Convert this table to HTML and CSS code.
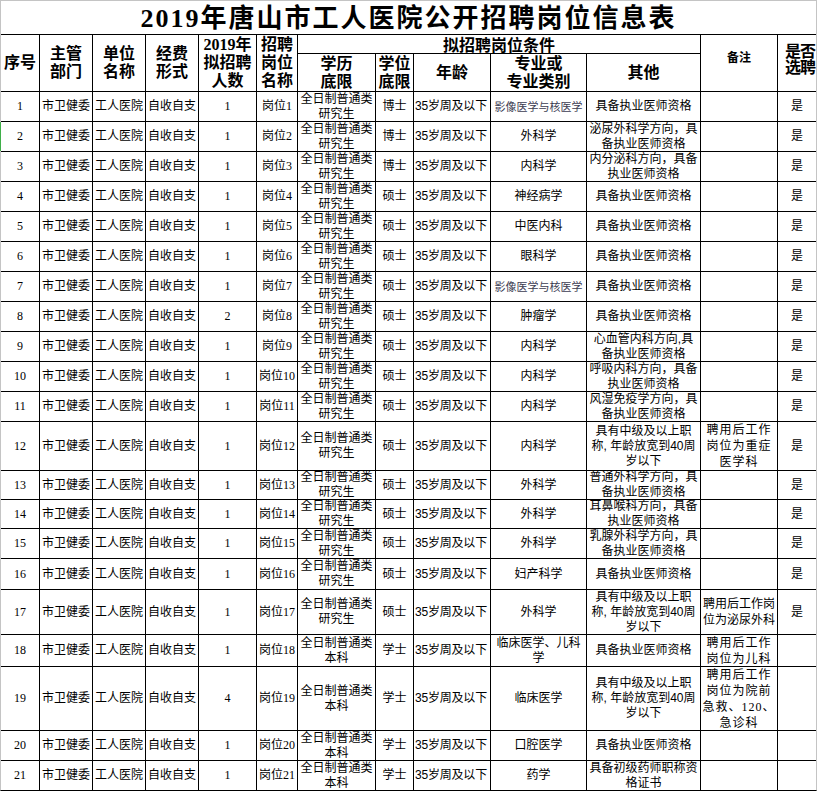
FILE: index.html
```html
<!DOCTYPE html>
<html lang="zh-CN">
<head>
<meta charset="utf-8">
<title>2019年唐山市工人医院公开招聘岗位信息表</title>
<link rel="stylesheet" href="styles.css">
</head>
<body>
<div class="sheet">
  <div class="c title">2019年唐山市工人医院公开招聘岗位信息表</div>

  <div class="c h span2">序号</div>
  <div class="c h span2">主管<br>部门</div>
  <div class="c h span2">单位<br>名称</div>
  <div class="c h span2">经费<br>形式</div>
  <div class="c h span2 h-num">2019年<br>拟招聘<br>人数</div>
  <div class="c h span2">招聘<br>岗位<br>名称</div>
  <div class="c h group">拟招聘岗位条件</div>
  <div class="c h span2 h-note">备注</div>
  <div class="c h span2 h-sel">是否<br>选聘</div>
  <div class="c h">学历<br>底限</div>
  <div class="c h">学位<br>底限</div>
  <div class="c h">年龄</div>
  <div class="c h">专业或<br>专业类别</div>
  <div class="c h">其他</div>

  <div class="row"><div class="c n">1</div><div class="c">市卫健委</div><div class="c">工人医院</div><div class="c">自收自支</div><div class="c n">1</div><div class="c">岗位1</div><div class="c">全日制普通类<br>研究生</div><div class="c">博士</div><div class="c age">35岁周及以下</div><div class="c"><span class="tiny">影像医学与核医学</span></div><div class="c other">具备执业医师资格</div><div class="c"></div><div class="c">是</div></div>

  <div class="row"><div class="c n mark">2</div><div class="c">市卫健委</div><div class="c">工人医院</div><div class="c">自收自支</div><div class="c n">1</div><div class="c">岗位2</div><div class="c">全日制普通类<br>研究生</div><div class="c">博士</div><div class="c age">35岁周及以下</div><div class="c">外科学</div><div class="c other">泌尿外科学方向，具<br>备执业医师资格</div><div class="c"></div><div class="c">是</div></div>

  <div class="row"><div class="c n">3</div><div class="c">市卫健委</div><div class="c">工人医院</div><div class="c">自收自支</div><div class="c n">1</div><div class="c">岗位3</div><div class="c">全日制普通类<br>研究生</div><div class="c">博士</div><div class="c age">35岁周及以下</div><div class="c">内科学</div><div class="c other">内分泌科方向，具备<br>执业医师资格</div><div class="c"></div><div class="c">是</div></div>

  <div class="row"><div class="c n">4</div><div class="c">市卫健委</div><div class="c">工人医院</div><div class="c">自收自支</div><div class="c n">1</div><div class="c">岗位4</div><div class="c">全日制普通类<br>研究生</div><div class="c">硕士</div><div class="c age">35岁周及以下</div><div class="c">神经病学</div><div class="c other">具备执业医师资格</div><div class="c"></div><div class="c">是</div></div>

  <div class="row"><div class="c n">5</div><div class="c">市卫健委</div><div class="c">工人医院</div><div class="c">自收自支</div><div class="c n">1</div><div class="c">岗位5</div><div class="c">全日制普通类<br>研究生</div><div class="c">硕士</div><div class="c age">35岁周及以下</div><div class="c">中医内科</div><div class="c other">具备执业医师资格</div><div class="c"></div><div class="c">是</div></div>

  <div class="row"><div class="c n">6</div><div class="c">市卫健委</div><div class="c">工人医院</div><div class="c">自收自支</div><div class="c n">1</div><div class="c">岗位6</div><div class="c">全日制普通类<br>研究生</div><div class="c">硕士</div><div class="c age">35岁周及以下</div><div class="c">眼科学</div><div class="c other">具备执业医师资格</div><div class="c"></div><div class="c">是</div></div>

  <div class="row"><div class="c n">7</div><div class="c">市卫健委</div><div class="c">工人医院</div><div class="c">自收自支</div><div class="c n">1</div><div class="c">岗位7</div><div class="c">全日制普通类<br>研究生</div><div class="c">硕士</div><div class="c age">35岁周及以下</div><div class="c"><span class="tiny">影像医学与核医学</span></div><div class="c other">具备执业医师资格</div><div class="c"></div><div class="c">是</div></div>

  <div class="row"><div class="c n">8</div><div class="c">市卫健委</div><div class="c">工人医院</div><div class="c">自收自支</div><div class="c n">2</div><div class="c">岗位8</div><div class="c">全日制普通类<br>研究生</div><div class="c">硕士</div><div class="c age">35岁周及以下</div><div class="c">肿瘤学</div><div class="c other">具备执业医师资格</div><div class="c"></div><div class="c">是</div></div>

  <div class="row"><div class="c n">9</div><div class="c">市卫健委</div><div class="c">工人医院</div><div class="c">自收自支</div><div class="c n">1</div><div class="c">岗位9</div><div class="c">全日制普通类<br>研究生</div><div class="c">硕士</div><div class="c age">35岁周及以下</div><div class="c">内科学</div><div class="c other">心血管内科方向,具<br>备执业医师资格</div><div class="c"></div><div class="c">是</div></div>

  <div class="row"><div class="c n">10</div><div class="c">市卫健委</div><div class="c">工人医院</div><div class="c">自收自支</div><div class="c n">1</div><div class="c">岗位10</div><div class="c">全日制普通类<br>研究生</div><div class="c">硕士</div><div class="c age">35岁周及以下</div><div class="c">内科学</div><div class="c other">呼吸内科方向，具备<br>执业医师资格</div><div class="c"></div><div class="c">是</div></div>

  <div class="row"><div class="c n">11</div><div class="c">市卫健委</div><div class="c">工人医院</div><div class="c">自收自支</div><div class="c n">1</div><div class="c">岗位11</div><div class="c">全日制普通类<br>研究生</div><div class="c">硕士</div><div class="c age">35岁周及以下</div><div class="c">内科学</div><div class="c other">风湿免疫学方向，具<br>备执业医师资格</div><div class="c"></div><div class="c">是</div></div>

  <div class="row"><div class="c n">12</div><div class="c">市卫健委</div><div class="c">工人医院</div><div class="c">自收自支</div><div class="c n">1</div><div class="c">岗位12</div><div class="c">全日制普通类<br>研究生</div><div class="c">硕士</div><div class="c age">35岁周及以下</div><div class="c">内科学</div><div class="c other">具有中级及以上职<br>称, 年龄放宽到40周<br>岁以下</div><div class="c note spaced">聘用后工作<br>岗位为重症<br>医学科</div><div class="c">是</div></div>

  <div class="row"><div class="c n">13</div><div class="c">市卫健委</div><div class="c">工人医院</div><div class="c">自收自支</div><div class="c n">1</div><div class="c">岗位13</div><div class="c">全日制普通类<br>研究生</div><div class="c">硕士</div><div class="c age">35岁周及以下</div><div class="c">外科学</div><div class="c other">普通外科学方向，具<br>备执业医师资格</div><div class="c"></div><div class="c">是</div></div>

  <div class="row"><div class="c n">14</div><div class="c">市卫健委</div><div class="c">工人医院</div><div class="c">自收自支</div><div class="c n">1</div><div class="c">岗位14</div><div class="c">全日制普通类<br>研究生</div><div class="c">硕士</div><div class="c age">35岁周及以下</div><div class="c">外科学</div><div class="c other">耳鼻喉科方向，具备<br>执业医师资格</div><div class="c"></div><div class="c">是</div></div>

  <div class="row"><div class="c n">15</div><div class="c">市卫健委</div><div class="c">工人医院</div><div class="c">自收自支</div><div class="c n">1</div><div class="c">岗位15</div><div class="c">全日制普通类<br>研究生</div><div class="c">硕士</div><div class="c age">35岁周及以下</div><div class="c">外科学</div><div class="c other">乳腺外科学方向，具<br>备执业医师资格</div><div class="c"></div><div class="c">是</div></div>

  <div class="row"><div class="c n">16</div><div class="c">市卫健委</div><div class="c">工人医院</div><div class="c">自收自支</div><div class="c n">1</div><div class="c">岗位16</div><div class="c">全日制普通类<br>研究生</div><div class="c">硕士</div><div class="c age">35岁周及以下</div><div class="c">妇产科学</div><div class="c other">具备执业医师资格</div><div class="c"></div><div class="c">是</div></div>

  <div class="row"><div class="c n">17</div><div class="c">市卫健委</div><div class="c">工人医院</div><div class="c">自收自支</div><div class="c n">1</div><div class="c">岗位17</div><div class="c">全日制普通类<br>研究生</div><div class="c">硕士</div><div class="c age">35岁周及以下</div><div class="c">外科学</div><div class="c other">具有中级及以上职<br>称, 年龄放宽到40周<br>岁以下</div><div class="c note">聘用后工作岗<br>位为泌尿外科</div><div class="c">是</div></div>

  <div class="row"><div class="c n">18</div><div class="c">市卫健委</div><div class="c">工人医院</div><div class="c">自收自支</div><div class="c n">1</div><div class="c">岗位18</div><div class="c">全日制普通类<br>本科</div><div class="c">学士</div><div class="c age">35岁周及以下</div><div class="c">临床医学、儿科<br>学</div><div class="c other">具备执业医师资格</div><div class="c note spaced">聘用后工作<br>岗位为儿科</div><div class="c"></div></div>

  <div class="row"><div class="c n">19</div><div class="c">市卫健委</div><div class="c">工人医院</div><div class="c">自收自支</div><div class="c n">4</div><div class="c">岗位19</div><div class="c">全日制普通类<br>本科</div><div class="c">学士</div><div class="c age">35岁周及以下</div><div class="c">临床医学</div><div class="c other">具有中级及以上职<br>称, 年龄放宽到40周<br>岁以下</div><div class="c note spaced">聘用后工作<br>岗位为院前<br>急救、120、<br>急诊科</div><div class="c"></div></div>

  <div class="row"><div class="c n">20</div><div class="c">市卫健委</div><div class="c">工人医院</div><div class="c">自收自支</div><div class="c n">1</div><div class="c">岗位20</div><div class="c">全日制普通类<br>本科</div><div class="c">学士</div><div class="c age">35岁周及以下</div><div class="c">口腔医学</div><div class="c other">具备执业医师资格</div><div class="c"></div><div class="c"></div></div>

  <div class="row"><div class="c n">21</div><div class="c">市卫健委</div><div class="c">工人医院</div><div class="c">自收自支</div><div class="c n">1</div><div class="c">岗位21</div><div class="c">全日制普通类<br>本科</div><div class="c">学士</div><div class="c age">35岁周及以下</div><div class="c">药学</div><div class="c other">具备初级药师职称资<br>格证书</div><div class="c"></div><div class="c"></div></div>
</div>
</body>
</html>
```

FILE: styles.css
```css
html, body {
  margin: 0;
  padding: 0;
  background: #ffffff;
}

.sheet {
  width: 817px;
  height: 791px;
  box-sizing: border-box;
  display: grid;
  grid-template-columns: 38px 52px 52px 52px 57px 40px 77px 37px 76px 95px 113px 76px 38px;
  grid-template-rows: 33px 18px 37px repeat(11, 29px) 48px 28px 28px 29px 30px 44px 31px 63px 29px 29px;
  gap: 1px;
  background: #000000;
  border-top: 1px solid #c4c4c4;
  border-left: 1px solid #c4c4c4;
  border-right: 1px solid #c4c4c4;
  border-bottom: 1px solid #000000;
  font-family: "Liberation Serif", "Noto Sans CJK SC", serif;
  font-size: 12px;
  line-height: 15px;
  color: #000000;
}

.row {
  display: contents;
}

.c {
  background: #ffffff;
  display: flex;
  align-items: center;
  justify-content: center;
  text-align: center;
  white-space: nowrap;
  position: relative;
}

.title {
  grid-column: 1 / -1;
  font-weight: 700;
  font-size: 26px;
  letter-spacing: 2px;
  line-height: 30px;
  padding-top: 3px;
  box-sizing: border-box;
}

.h {
  font-weight: 700;
  font-size: 16px;
  line-height: 18px;
}

.span2 {
  grid-row: span 2;
}

.group {
  grid-column: span 5;
  line-height: 16px;
  padding-top: 3px;
  box-sizing: border-box;
}

.h-note {
  font-size: 12px;
  padding-bottom: 10px;
  box-sizing: border-box;
}

.h-sel {
  line-height: 16px;
  letter-spacing: -1px;
  justify-content: flex-end;
  padding-right: 1px;
  padding-bottom: 6px;
  box-sizing: border-box;
}

.n {
  font-family: "Liberation Serif", serif;
}

.age {
  justify-content: flex-start;
  padding-left: 1px;
  font-family: "Liberation Sans", "Noto Sans CJK SC", sans-serif;
  letter-spacing: -0.2px;
}

.other {
  font-family: "Liberation Sans", "Noto Sans CJK SC", sans-serif;
}

.tiny {
  font-family: "Noto Sans CJK SC", sans-serif;
  font-size: 11px;
  color: #3c3c52;
}

.note {
  line-height: 16px;
}

.spaced {
  letter-spacing: 1px;
}

.mark::before {
  content: "";
  position: absolute;
  left: -1px;
  top: 0;
  bottom: 0;
  width: 1px;
  background: #3fae49;
}
```
